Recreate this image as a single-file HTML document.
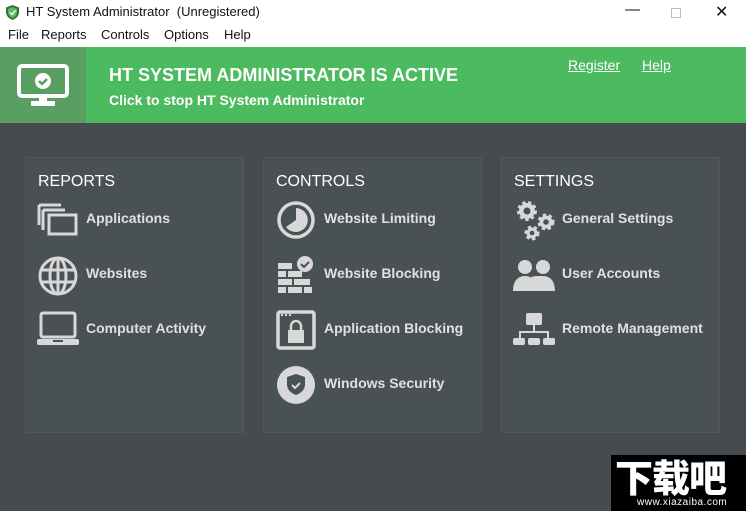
<!DOCTYPE html>
<html><head><meta charset="utf-8"><style>
*{margin:0;padding:0;box-sizing:border-box}
body{width:746px;height:511px;overflow:hidden;background:#454b4f;font-family:"Segoe UI","Liberation Sans","DejaVu Sans",sans-serif;position:relative}
.tb{position:absolute;left:0;top:0;width:746px;height:25px;background:#fff;font-size:13px;color:#111}
.mb{position:absolute;left:0;top:25px;width:746px;height:22px;background:#fff;font-size:13px;color:#111}
.mb span{position:absolute;top:2px}
.hdr{position:absolute;left:0;top:47px;width:746px;height:76px;background:#4cba5e}
.hl{position:absolute;left:0;top:0;width:86px;height:76px;background:#5a9f62}
.h1{position:absolute;left:109px;top:18px;color:#fff;font-size:18px;font-weight:bold}
.h2{position:absolute;left:109px;top:45px;color:#fff;font-size:14px;font-weight:bold}
.lk{position:absolute;top:10px;color:#fff;font-size:14px;text-decoration:underline}
.pn{position:absolute;top:157px;width:219px;height:276px;background:#4a5155;border:1px solid #505659}
.pt{position:absolute;left:12px;top:15px;color:#fff;font-size:16px}
.it{position:absolute;left:60px;color:#e0e0e0;font-size:14px;font-weight:bold}
.ic{position:absolute;left:11px}
.wm{position:absolute;left:611px;top:455px;width:135px;height:56px;background:#000;color:#fff}
</style></head><body>
<div class="tb">
<svg style="position:absolute;left:6px;top:5px" width="13" height="15" viewBox="0 0 13 15"><path d="M6.5 0L13 2.5V7c0 4-3 6.5-6.5 8C3 13.5 0 11 0 7V2.5z" fill="#3a6b3e"/><path d="M6.5 2L11 4V7c0 3-2 5-4.5 6C4 12 2 10 2 7V4z" fill="#5dbb63"/><path d="M4 7.5l2 2 3.5-4" stroke="#fff" stroke-width="1.3" fill="none"/></svg>
<span style="position:absolute;left:26px;top:4px">HT System Administrator&nbsp; (Unregistered)</span>
<span style="position:absolute;left:625px;top:1px;font-size:15px">—</span>
<span style="position:absolute;left:671px;top:4px;width:10px;height:10px;border:1px solid #bbb;top:8px"></span>
<span style="position:absolute;left:715px;top:2px;font-size:16px">✕</span>
</div>
<div class="mb"><span style="left:8px">File</span><span style="left:41px">Reports</span><span style="left:101px">Controls</span><span style="left:164px">Options</span><span style="left:224px">Help</span></div>
<div class="hdr"><div class="hl">
<svg style="position:absolute;left:17px;top:17px" width="52" height="44" viewBox="0 0 52 44"><rect x="2" y="2" width="48" height="30" rx="3" fill="none" stroke="#fff" stroke-width="4"/><rect x="22" y="32" width="8" height="6" fill="#fff"/><rect x="14" y="37" width="24" height="5" rx="1" fill="#fff"/><circle cx="26" cy="17" r="8" fill="#fff"/><path d="M22 17l3 3 5-5" stroke="#5a9f62" stroke-width="2.5" fill="none"/></svg></div>
<div class="h1">HT SYSTEM ADMINISTRATOR IS ACTIVE</div>
<div class="h2">Click to stop HT System Administrator</div>
<span class="lk" style="left:568px">Register</span><span class="lk" style="left:642px">Help</span>
</div>

<div class="pn" style="left:25px"><div class="pt">REPORTS</div>
<svg class="ic" style="top:45px" width="42" height="34" viewBox="0 0 42 34"><g fill="none" stroke="#d8d8d8" stroke-width="3"><path d="M2 2h22M2 2v20M6 7h22M6 7v20"/><rect x="12" y="12" width="27" height="19"/></g></svg>
<div class="it" style="top:52px">Applications</div>
<svg class="ic" style="top:97px" width="42" height="42" viewBox="0 0 42 42"><g fill="none" stroke="#d8d8d8" stroke-width="3"><circle cx="21" cy="21" r="18"/><ellipse cx="21" cy="21" rx="8" ry="18"/><path d="M3 15h36M3 27h36M21 3v36"/></g></svg>
<div class="it" style="top:107px">Websites</div>
<svg class="ic" style="top:153px" width="42" height="36" viewBox="0 0 42 36"><rect x="4" y="2" width="34" height="24" rx="2" fill="none" stroke="#d8d8d8" stroke-width="3"/><rect x="0" y="28" width="42" height="6" rx="2" fill="#d8d8d8"/><rect x="16" y="29" width="10" height="2" fill="#4a5155"/></svg>
<div class="it" style="top:162px">Computer Activity</div>
</div>

<div class="pn" style="left:263px"><div class="pt">CONTROLS</div>
<svg class="ic" style="top:42px;left:12px" width="40" height="40" viewBox="0 0 40 40"><circle cx="20" cy="20" r="17" fill="none" stroke="#d8d8d8" stroke-width="3.5"/><path d="M20 8A12 12 0 1 1 10 27L20 20z" fill="#d8d8d8"/></svg>
<div class="it" style="top:52px">Website Limiting</div>
<svg class="ic" style="top:97px;left:14px" width="36" height="38" viewBox="0 0 36 38"><g fill="#d8d8d8"><rect x="0" y="8" width="14" height="6"/><rect x="0" y="16" width="8" height="6"/><rect x="10" y="16" width="14" height="6"/><rect x="0" y="24" width="14" height="6"/><rect x="16" y="24" width="16" height="6"/><rect x="0" y="32" width="8" height="6"/><rect x="10" y="32" width="14" height="6"/><rect x="26" y="32" width="8" height="6"/><circle cx="27" cy="9" r="8"/></g><path d="M23 9l3 3 5-5" stroke="#4a5155" stroke-width="2" fill="none"/></svg>
<div class="it" style="top:107px">Website Blocking</div>
<svg class="ic" style="top:152px;left:12px" width="40" height="40" viewBox="0 0 40 40"><rect x="2" y="2" width="36" height="36" rx="2" fill="none" stroke="#d8d8d8" stroke-width="3.5"/><rect x="5" y="4" width="2" height="2" fill="#d8d8d8"/><rect x="9" y="4" width="2" height="2" fill="#d8d8d8"/><rect x="13" y="4" width="2" height="2" fill="#d8d8d8"/><rect x="12" y="20" width="16" height="13" fill="#d8d8d8"/><path d="M15 20v-4a5 5 0 0 1 10 0v4" fill="none" stroke="#d8d8d8" stroke-width="2.5"/></svg>
<div class="it" style="top:162px">Application Blocking</div>
<svg class="ic" style="top:207px;left:12px" width="40" height="40" viewBox="0 0 40 40"><circle cx="20" cy="20" r="19" fill="#d8d8d8"/><path d="M20 9l9 3v7c0 6-4 9-9 11-5-2-9-5-9-11v-7z" fill="#4a5155"/><path d="M16 20l3 3 5-5" stroke="#d8d8d8" stroke-width="2" fill="none"/></svg>
<div class="it" style="top:217px">Windows Security</div>
</div>

<div class="pn" style="left:501px"><div class="pt">SETTINGS</div>
<svg class="ic" style="top:42px;left:13px" width="42" height="42" viewBox="0 0 42 42"><g fill="#d8d8d8" stroke="#d8d8d8" stroke-width="4" stroke-dasharray="3 2.5"><circle cx="12" cy="11" r="8"/><circle cx="31" cy="22" r="6.5"/><circle cx="17" cy="33" r="5.5"/></g><g fill="#4a5155"><circle cx="12" cy="11" r="3.5"/><circle cx="31" cy="22" r="2.8"/><circle cx="17" cy="33" r="2.3"/></g></svg>
<div class="it" style="top:52px">General Settings</div>
<svg class="ic" style="top:100px" width="42" height="34" viewBox="0 0 42 34"><g fill="#d8d8d8"><circle cx="12" cy="9" r="7"/><circle cx="30" cy="9" r="7"/><path d="M0 33c0-10 5-15 12-15s12 5 12 15z"/><path d="M22 33c0-8-2-12-4-14 3-1 6-1 12-1 7 0 12 5 12 15z"/></g></svg>
<div class="it" style="top:107px">User Accounts</div>
<svg class="ic" style="top:155px" width="42" height="34" viewBox="0 0 42 34"><g fill="#d8d8d8"><rect x="13" y="0" width="16" height="12" rx="2"/><rect x="20" y="12" width="2" height="8"/><rect x="6" y="18" width="30" height="2"/><rect x="6" y="18" width="2" height="8"/><rect x="34" y="18" width="2" height="8"/><rect x="0" y="25" width="12" height="7" rx="2"/><rect x="15" y="25" width="12" height="7" rx="2"/><rect x="30" y="25" width="12" height="7" rx="2"/></g></svg>
<div class="it" style="top:162px">Remote Management</div>
</div>

<div class="wm"><div style="position:absolute;left:4px;top:-2px;font-family:'Noto Sans CJK SC',sans-serif;font-size:38px;font-weight:900;letter-spacing:-1px;line-height:46px">下载吧</div><div style="position:absolute;left:26px;top:42px;font-size:10px;letter-spacing:0.5px">www.xiazaiba.com</div></div>
</body></html>
